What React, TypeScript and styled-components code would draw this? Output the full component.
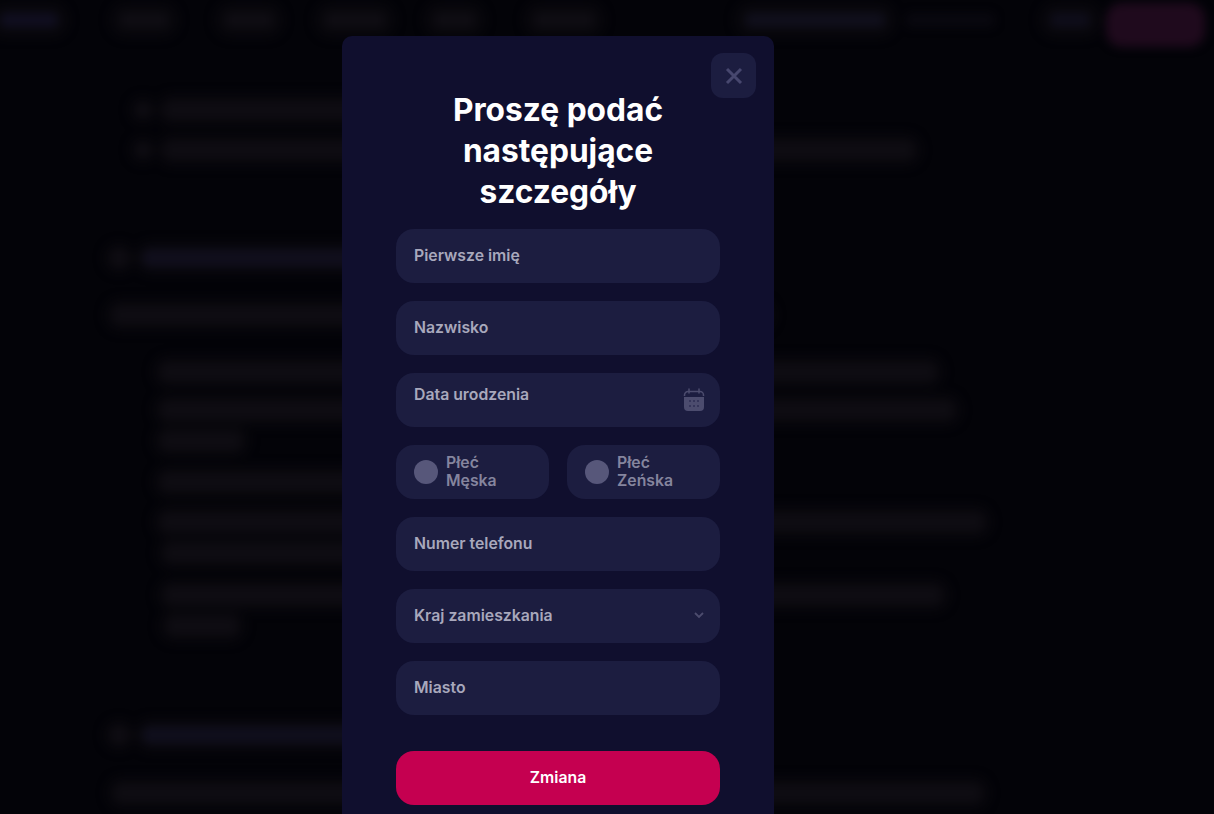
import React from 'react';
import styled, { createGlobalStyle } from 'styled-components';

const GlobalStyle = createGlobalStyle`
  html, body {
    margin: 0;
    height: 100%;
    background: #030308;
    overflow: hidden;
  }
  * {
    box-sizing: border-box;
  }
`;

const Page = styled.div`
  width: 100%;
  height: 814px;
  overflow: hidden;
  position: relative;
  font-family: Inter, "Noto Sans", sans-serif;
`;

/* the page behind the dialog, out of focus */
const Backdrop = styled.div`
  height: 100%;
  filter: blur(5px);
`;

const Header = styled.div`
  height: 40px;
  padding-top: 13px;
  display: flex;
  align-items: flex-start;
`;

const Pill = styled.div<{ $w: number; $ml: number; $tone?: string; $flat?: boolean }>`
  width: ${(p) => p.$w}px;
  height: 14px;
  margin-left: ${(p) => p.$ml}px;
  border-radius: 7px;
  background: ${(p) => p.$tone || '#0f0d13'};
  box-shadow: ${(p) => (p.$flat ? 'none' : '0 0 0 11px #08070c')};
  flex-shrink: 0;
`;

const CtaPill = styled.div`
  width: 99px;
  height: 44px;
  margin-left: 16px;
  margin-top: -10px;
  border-radius: 16px;
  background: #1f0a1d;
  flex-shrink: 0;
`;

const Article = styled.div`
  display: flex;
  flex-direction: column;
`;

const Row = styled.div<{ $x: number; $mt: number }>`
  display: flex;
  align-items: center;
  gap: 14px;
  margin-left: ${(p) => p.$x}px;
  margin-top: ${(p) => p.$mt}px;
`;

const Marker = styled.div<{ $d: number }>`
  width: ${(p) => p.$d}px;
  height: ${(p) => p.$d}px;
  border-radius: 50%;
  background: #0e0c12;
  box-shadow: 0 0 0 7px #08070c;
  flex-shrink: 0;
`;

const TextLine = styled.div<{ $w: number; $tone?: string }>`
  width: ${(p) => p.$w}px;
  height: 18px;
  border-radius: 9px;
  background: ${(p) => p.$tone || '#0e0c12'};
  box-shadow: 0 0 0 8px #08070c;
`;

const Overlay = styled.div`
  position: absolute;
  inset: 0;
  display: flex;
  justify-content: center;
  align-items: flex-start;
  padding: 36px 98px 0 0;
`;

const Dialog = styled.div`
  width: 432px;
  flex-shrink: 0;
  position: relative;
  background: #100f2e;
  border-radius: 10px;
  padding: 53px 54px 40px;
`;

const CloseButton = styled.button`
  position: absolute;
  top: 17px;
  right: 18px;
  width: 45px;
  height: 45px;
  padding: 0;
  border: 0;
  border-radius: 12px;
  background: #1c1d40;
  display: flex;
  align-items: center;
  justify-content: center;
`;

const Title = styled.h2`
  margin: 0 0 17px;
  font-size: 31.7px;
  line-height: 41px;
  font-weight: 700;
  color: #ffffff;
  text-align: center;
`;

const Form = styled.div`
  display: flex;
  flex-direction: column;
  gap: 18px;
`;

const Field = styled.div<{ $top?: boolean }>`
  height: 54px;
  border-radius: 18px;
  background: #1c1d40;
  padding: ${(p) => (p.$top ? '12px 16px 0 18px' : '1px 16px 2px 18px')};
  display: flex;
  align-items: ${(p) => (p.$top ? 'flex-start' : 'center')};
  justify-content: space-between;
  font-size: 15.8px;
  line-height: 20px;
  font-weight: 600;
  color: #a8a8bc;
`;

const GenderRow = styled.div`
  display: grid;
  grid-template-columns: 1fr 1fr;
  gap: 18px;
`;

const GenderOption = styled.div`
  height: 54px;
  border-radius: 18px;
  background: #1c1d40;
  padding: 0 18px;
  display: flex;
  align-items: center;
  gap: 8px;
  font-size: 15.8px;
  line-height: 18px;
  font-weight: 600;
  color: #85859e;
`;

const RadioDot = styled.span`
  width: 24px;
  height: 24px;
  border-radius: 50%;
  background: #57577a;
  flex-shrink: 0;
`;

const GenderLabel = styled.span`
  width: 60px;
`;

const SubmitButton = styled.button`
  width: 100%;
  height: 54px;
  margin-top: 36px;
  padding: 0 0 2px;
  border: 0;
  border-radius: 18px;
  background: #c50050;
  color: #ffffff;
  font-family: inherit;
  font-size: 15.8px;
  font-weight: 600;
`;

const CalendarIcon = () => (
  <svg width="22" height="24" viewBox="0 0 22 24" style={{ marginTop: 3, marginRight: -1 }}>
    <path d="M6 1v4M16 1v4" stroke="#4c4c6e" strokeWidth="1.5" strokeLinecap="round" />
    <path d="M1.5 8V7a3.5 3.5 0 0 1 3.5-3.5h12A3.5 3.5 0 0 1 20.5 7v1" fill="none" stroke="#4c4c6e" strokeWidth="1.5" />
    <path d="M1 9h20v10a4 4 0 0 1-4 4H5a4 4 0 0 1-4-4z" fill="#4c4c6e" />
    <g fill="#35355a">
      <rect x="6" y="12" width="2" height="2" />
      <rect x="10" y="12" width="2" height="2" />
      <rect x="14" y="12" width="2" height="2" />
      <rect x="6" y="17" width="2" height="2" />
      <rect x="10" y="17" width="2" height="2" />
      <rect x="14" y="17" width="2" height="2" />
    </g>
  </svg>
);

const App: React.FC = () => {
  return (
    <Page>
      <GlobalStyle />
      <Backdrop>
        <Header>
          <Pill $w={58} $ml={0} $tone="#100e20" />
          <Pill $w={48} $ml={62} />
          <Pill $w={48} $ml={57} />
          <Pill $w={60} $ml={52} />
          <Pill $w={41} $ml={49} />
          <Pill $w={60} $ml={59} />
          <Pill $w={140} $ml={151} $tone="#100f1c" />
          <Pill $w={90} $ml={20} $tone="#09080f" $flat />
          <Pill $w={40} $ml={55} $tone="#0e0d1a" />
          <CtaPill />
        </Header>
        <Article>
          <Row $x={136} $mt={61}>
            <Marker $d={14} />
            <TextLine $w={590} />
          </Row>
          <Row $x={136} $mt={22}>
            <Marker $d={14} />
            <TextLine $w={750} />
          </Row>
          <Row $x={110} $mt={90}>
            <Marker $d={18} />
            <TextLine $w={300} $tone="#100e1c" />
          </Row>
          <Row $x={112} $mt={39}>
            <TextLine $w={656} />
          </Row>
          <Row $x={160} $mt={39}>
            <TextLine $w={776} />
          </Row>
          <Row $x={160} $mt={20}>
            <TextLine $w={794} />
          </Row>
          <Row $x={160} $mt={13}>
            <TextLine $w={82} />
          </Row>
          <Row $x={160} $mt={23}>
            <TextLine $w={400} />
          </Row>
          <Row $x={160} $mt={22}>
            <TextLine $w={824} />
          </Row>
          <Row $x={164} $mt={13}>
            <TextLine $w={300} />
          </Row>
          <Row $x={164} $mt={24}>
            <TextLine $w={778} />
          </Row>
          <Row $x={166} $mt={13}>
            <TextLine $w={72} />
          </Row>
          <Row $x={110} $mt={91}>
            <Marker $d={18} />
            <TextLine $w={400} $tone="#0f0e1c" />
          </Row>
          <Row $x={114} $mt={40}>
            <TextLine $w={868} />
          </Row>
        </Article>
      </Backdrop>
      <Overlay>
        <Dialog>
          <CloseButton aria-label="close">
            <svg width="18" height="18" viewBox="0 0 18 18">
              <path d="M2 2l14 14M16 2L2 16" stroke="#47476e" strokeWidth="3" />
            </svg>
          </CloseButton>
          <Title>Proszę podać następujące szczegóły</Title>
          <Form>
            <Field>Pierwsze imię</Field>
            <Field>Nazwisko</Field>
            <Field $top>
              Data urodzenia
              <CalendarIcon />
            </Field>
            <GenderRow>
              <GenderOption>
                <RadioDot />
                <GenderLabel>Płeć Męska</GenderLabel>
              </GenderOption>
              <GenderOption>
                <RadioDot />
                <GenderLabel>Płeć Zeńska</GenderLabel>
              </GenderOption>
            </GenderRow>
            <Field>Numer telefonu</Field>
            <Field>
              Kraj zamieszkania
              <svg width="10" height="7" viewBox="0 0 10 7">
                <path d="M1 1l4 4 4-4" fill="none" stroke="#4c4c6e" strokeWidth="1.8" />
              </svg>
            </Field>
            <Field>Miasto</Field>
          </Form>
          <SubmitButton>Zmiana</SubmitButton>
        </Dialog>
      </Overlay>
    </Page>
  );
};

export default App;
